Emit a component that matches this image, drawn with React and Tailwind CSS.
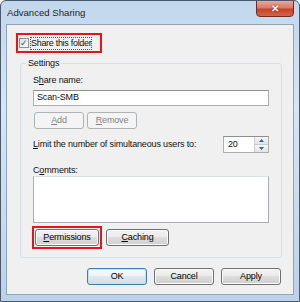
import React from 'react';

function WinButton({ children, className = '', disabled = false, focused = false }) {
    return (
        <button
            type="button"
            disabled={disabled}
            className={
                'rounded-[3px] border text-[9px] tracking-[-0.15px] leading-none flex items-center justify-center ' +
                (disabled
                    ? 'border-[#adb2b5] bg-[#f4f4f4] text-[#838383] '
                    : focused
                    ? 'border-[#3c7fb1] bg-[linear-gradient(#f4f9fc_0%,#eef4f8_45%,#e0e8ee_50%,#d4dde4_100%)] text-black shadow-[inset_0_0_0_1px_#bfe3f7] '
                    : 'border-[#707070] bg-[linear-gradient(#f2f2f2_0%,#ebebeb_45%,#dddddd_50%,#cfcfcf_100%)] text-black shadow-[inset_0_0_0_1px_#fbfbfb] ') +
                className
            }
        >
            {children}
        </button>
    );
}

export default function App() {
    return (
        <div className="w-[300px] h-[302px] font-['Liberation_Sans',Arial,sans-serif] text-[#111] border border-[#4a5a6c] rounded-t-[6px] bg-[linear-gradient(180deg,#c2d7ed_0%,#d7e5f4_35%,#bcd2ea_100%)] flex flex-col overflow-hidden">
            {/* title bar */}
            <div className="h-[23px] flex items-start justify-between pl-[6px] shrink-0">
                <span className="text-[9.6px] mt-[7px] leading-none text-[#1e1e1e]">Advanced Sharing</span>
                <div className="w-[38px] h-[17px] mr-[5px] mt-[-1px] rounded-b-[4px] border border-[#6d2b22] bg-[linear-gradient(180deg,#e9a99a_0%,#d97b65_45%,#c2432a_55%,#d3654a_100%)] flex items-center justify-center">
                    <span className="text-white text-[10px] font-bold leading-none [text-shadow:0_0_2px_#5a1a10]">✕</span>
                </div>
            </div>

            {/* client area */}
            <div className="mx-[5px] mb-[6px] flex-1 border border-[#8ea4bd] bg-[#f0f0f0] flex flex-col pl-[13px] pr-[11px] text-[9px] tracking-[-0.15px]">
                <div className="mt-[8px] ml-[-4px] w-[86px] h-[20px] border-2 border-[#e4151b] flex items-center pl-[1px] whitespace-nowrap">
                    <span className="w-[10px] h-[10px] shrink-0 border border-[#8f8f8f] bg-[linear-gradient(135deg,#dcdcdc,#ffffff)] flex items-center justify-center text-[#2a4c8c] text-[9px] leading-none">✓</span>
                    <span className="ml-[1px] leading-none border border-dotted border-[#555] py-[1px] tracking-[-0.3px]">Share this folder</span>
                </div>

                <fieldset className="mt-[5px] border border-[#d5dfe5] rounded-[3px] px-[12px] pb-[8px]">
                    <legend className="px-[2px] ml-[-7px] leading-[10px]">Settings</legend>
                    <div className="leading-none mt-[8px]">
                        S<span className="underline">h</span>are name:
                    </div>
                    <div className="mt-[5px] h-[16px] border border-[#abadb3] border-t-[#8e8f8f] bg-white flex items-center pl-[3px]">
                        Scan-SMB
                    </div>
                    <div className="mt-[6px] ml-[1px] flex gap-[3px]">
                        <WinButton disabled className="w-[50px] h-[17px]">
                            <span className="underline">A</span>dd
                        </WinButton>
                        <WinButton disabled className="w-[50px] h-[17px]">
                            <span className="underline">R</span>emove
                        </WinButton>
                    </div>
                    <div className="mt-[7px] flex items-center justify-between">
                        <span className="leading-none">
                            <span className="underline">L</span>imit the number of simultaneous users to:
                        </span>
                        <div className="w-[46px] h-[17px] border border-[#abadb3] border-t-[#8e8f8f] bg-white flex">
                            <span className="flex-1 flex items-center pl-[4px]">20</span>
                            <div className="w-[14px] flex flex-col border-l border-[#c8ccd2]">
                                <div className="flex-1 border-b border-[#c8ccd2] bg-[linear-gradient(#f6f6f6,#e4e4e4)] flex items-center justify-center">
                                    <svg width="5" height="3" viewBox="0 0 5 3"><path d="M0 3 L2.5 0 L5 3Z" fill="#3c5a9a" /></svg>
                                </div>
                                <div className="flex-1 bg-[linear-gradient(#f6f6f6,#e4e4e4)] flex items-center justify-center">
                                    <svg width="5" height="3" viewBox="0 0 5 3"><path d="M0 0 L2.5 3 L5 0Z" fill="#3c5a9a" /></svg>
                                </div>
                            </div>
                        </div>
                    </div>
                    <div className="leading-none mt-[13px]">
                        C<span className="underline">o</span>mments:
                    </div>
                    <div className="mt-[1px] h-[47px] border border-[#abadb3] border-t-[#dbdfe6] bg-white" />
                    <div className="mt-[3px] flex items-center gap-[4px]">
                        <div className="border-2 border-[#e4151b] p-[1px] ml-[-1px]">
                            <WinButton className="w-[64px] h-[17px]">
                                <span className="underline">P</span>ermissions
                            </WinButton>
                        </div>
                        <WinButton className="w-[63px] h-[17px]">
                            <span className="underline">C</span>aching
                        </WinButton>
                    </div>
                </fieldset>

                <div className="mt-[10px] flex justify-end gap-[7px] pr-[1px]">
                    <WinButton focused className="w-[60px] h-[17px]">OK</WinButton>
                    <WinButton className="w-[60px] h-[17px]">Cancel</WinButton>
                    <WinButton className="w-[60px] h-[17px]">Apply</WinButton>
                </div>
            </div>
        </div>
    );
}
